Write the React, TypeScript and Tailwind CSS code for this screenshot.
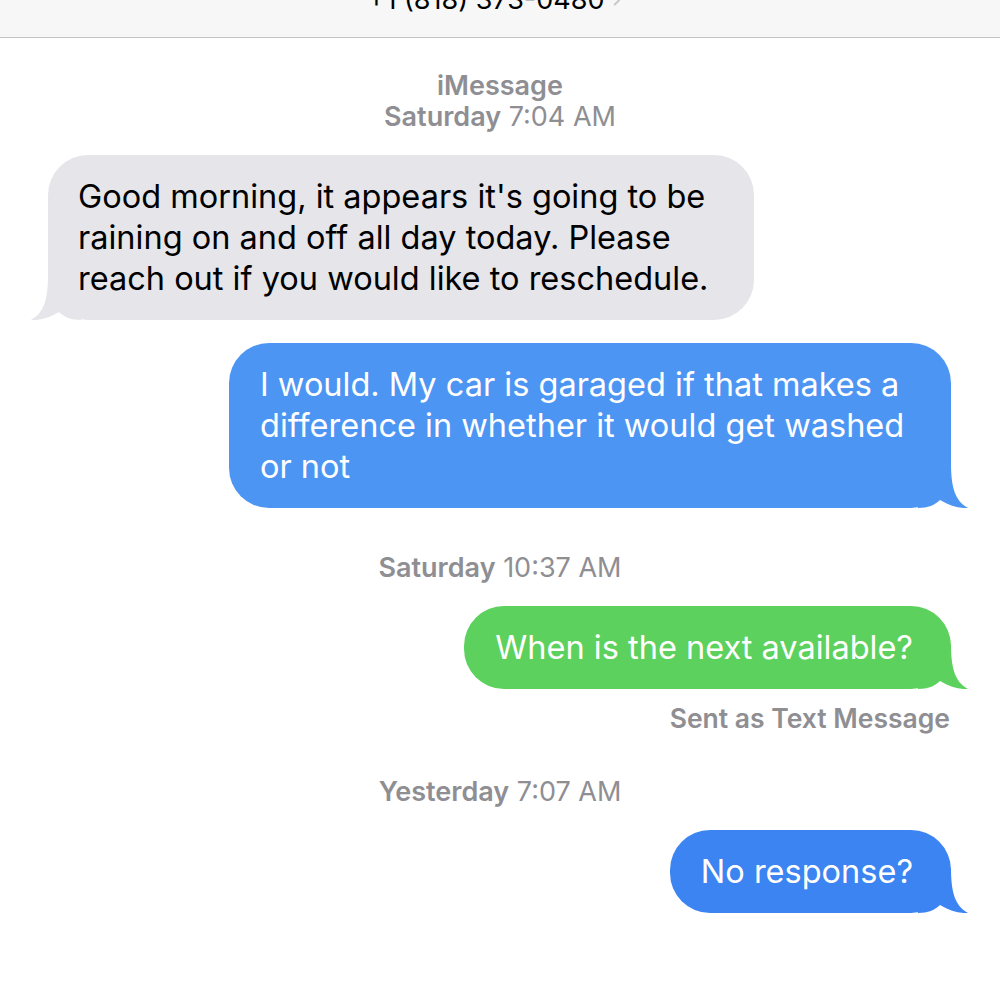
import { ChevronRight } from "lucide-react";

type Side = "left" | "right";

function Tail({ side, color }: { side: Side; color: string }) {
  return (
    <svg
      width="50"
      height="45"
      viewBox="0 0 50 45"
      className={
        side === "right"
          ? "absolute bottom-0 right-[-17px]"
          : "absolute bottom-0 left-[-17px] -scale-x-100"
      }
    >
      <path
        d="M0 45 L0 0 L33 0 C33 24 37 38 50 45 C41 45.5 32 43 22 37 C17 42 10 45 0 45 Z"
        fill={color}
      />
    </svg>
  );
}

function Bubble({
  side,
  color,
  text,
  light,
  className,
}: {
  side: Side;
  color: string;
  text: string;
  light?: boolean;
  className: string;
}) {
  return (
    <div className={`flex ${side === "right" ? "justify-end pr-[49px]" : "justify-start pl-[48px]"} ${className}`}>
      <div
        className={`relative rounded-[40px] py-[21px] text-[32.5px] leading-[41px] ${
          side === "right" ? "max-w-[722px] pl-[31px] pr-[38px]" : "max-w-[706px] pl-[30px] pr-[34px]"
        } ${light ? "text-white" : "text-black"}`}
        style={{ backgroundColor: color }}
      >
        <Tail side={side} color={color} />
        <span className="relative">{text}</span>
      </div>
    </div>
  );
}

function Stamp({ day, time, className }: { day: string; time: string; className: string }) {
  return (
    <div className={`text-center text-[27px] leading-[31px] text-[#8e8e93] ${className}`}>
      <span className="font-semibold">{day}</span> {time}
    </div>
  );
}

export default function App() {
  return (
    <div className="w-[1000px] h-[1000px] bg-white overflow-hidden font-['Inter',sans-serif]">
      <div className="h-[38px] bg-[#f7f7f7] border-b border-[#c4c4c6] overflow-hidden">
        <div className="flex items-center justify-center -mt-[15px] ml-[-6px] text-[27px] leading-[30px] text-black">
          <span>+1 (818) 373-0480</span>
          <ChevronRight className="ml-[4px] w-[18px] h-[22px] text-[#c7c7cc]" strokeWidth={2.5} />
        </div>
      </div>

      <div className="mt-[32px] text-center text-[27px] leading-[31px] text-[#8e8e93]">
        <div className="font-semibold">iMessage</div>
        <div>
          <span className="font-semibold">Saturday</span> 7:04 AM
        </div>
      </div>

      <Bubble
        side="left"
        color="#e5e5ea"
        className="mt-[23px]"
        text="Good morning, it appears it's going to be raining on and off all day today. Please reach out if you would like to reschedule."
      />

      <Bubble
        side="right"
        color="#4d95f3"
        light
        className="mt-[23px]"
        text="I would. My car is garaged if that makes a difference in whether it would get washed or not"
      />

      <Stamp day="Saturday" time="10:37 AM" className="mt-[44px]" />

      <Bubble side="right" color="#5dd15d" light className="mt-[23px]" text="When is the next available?" />

      <div className="mt-[14px] pr-[50px] text-right text-[26.5px] leading-[31px] font-semibold text-[#8e8e93]">
        Sent as Text Message
      </div>

      <Stamp day="Yesterday" time="7:07 AM" className="mt-[42px]" />

      <Bubble side="right" color="#3b84f1" light className="mt-[23px]" text="No response?" />
    </div>
  );
}
